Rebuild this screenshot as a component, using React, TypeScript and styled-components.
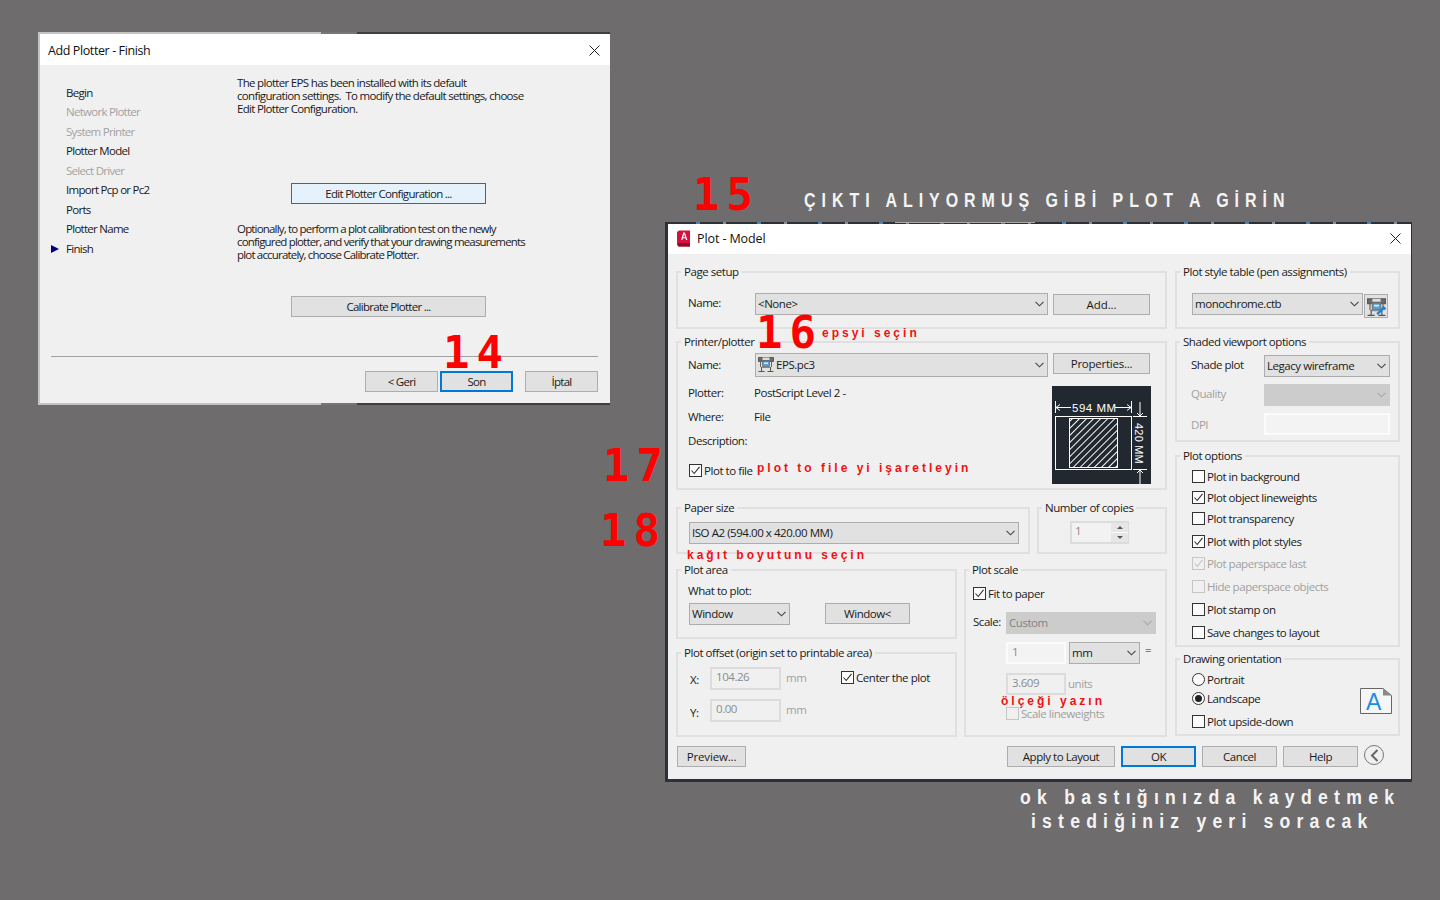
import React from 'react'
import styled, { createGlobalStyle } from 'styled-components'

const Global = createGlobalStyle`
  html, body { margin: 0; padding: 0; background: #6e6c6d; }
  * { box-sizing: border-box; }
`

const Desktop = styled.div`
  position: relative;
  width: 1440px;
  height: 900px;
  overflow: hidden;
  background: #6e6c6d;
  font-family: 'Open Sans', 'Noto Sans', sans-serif;
  font-size: 11.5px;
  color: #1a1a1a;
`

/* ---------- annotations painted over the screenshot ---------- */

const BigNumber = styled.div<{ $x: number; $y: number }>`
  position: absolute;
  left: ${p => p.$x}px;
  top: ${p => p.$y}px;
  font-family: 'DejaVu Sans Mono', monospace;
  font-weight: 700;
  font-size: 44px;
  line-height: 36px;
  letter-spacing: 7px;
  color: #fe0000;
  white-space: nowrap;
  z-index: 5;
`

const RedNote = styled.div<{ $x: number; $y: number }>`
  position: absolute;
  left: ${p => p.$x}px;
  top: ${p => p.$y}px;
  font-family: 'Liberation Sans', sans-serif;
  font-weight: 700;
  font-size: 12px;
  line-height: 14px;
  letter-spacing: 3px;
  color: #f01010;
  white-space: nowrap;
  z-index: 5;
`

const WhiteNote = styled.div<{ $x: number; $y: number; $ls: number; $sx: number }>`
  position: absolute;
  left: ${p => p.$x}px;
  top: ${p => p.$y}px;
  font-family: 'Liberation Sans', sans-serif;
  font-weight: 700;
  font-size: 20px;
  line-height: 24px;
  letter-spacing: ${p => p.$ls}px;
  color: #f4f4f4;
  white-space: nowrap;
  transform: scaleX(${p => p.$sx});
  transform-origin: left center;
  z-index: 5;
`

/* ---------- generic dialog parts ---------- */

const WizardWindow = styled.div`
  position: absolute;
  left: 38px;
  top: 32px;
  width: 572px;
  height: 373px;
  padding: 2px 0 2px 2px;
  letter-spacing: -0.72px;
  background: linear-gradient(90deg, #c4c4c4 0 283px, #77757a 283px 319px, #3f3f42 319px 100%);
`

const PlotWindow = styled.div`
  position: absolute;
  left: 665px;
  top: 222px;
  width: 747px;
  height: 560px;
  padding: 2px 1px 3px 3px;
  letter-spacing: -0.45px;
  background:
    linear-gradient(90deg, transparent 0 230px, #a9a9a9 230px 370px, transparent 370px 100%) top / 100% 1px no-repeat,
    repeating-linear-gradient(90deg, #2c3037 0 31px, #4a86b8 31px 35px, #2c3037 35px 58px, #8b8d90 58px 61px) top / 100% 2px no-repeat,
    #2c3037;
`

const Dialog = styled.div`
  display: flex;
  flex-direction: column;
  width: 100%;
  height: 100%;
  background: #f0f0f0;
`

const TitleBar = styled.div<{ $h: number; $pl: number; $pt: number; $ls: number }>`
  display: flex;
  align-items: center;
  flex: none;
  height: ${p => p.$h}px;
  padding: ${p => p.$pt}px 10px ${p => 2 - p.$pt}px ${p => p.$pl}px;
  background: #fff;
  font-size: 12.5px;
  letter-spacing: ${p => p.$ls}px;
  color: #111;
`

const TitleText = styled.span`
  flex: 1;
`

const Btn = styled.div<{ $w: number; $h?: number; $primary?: boolean; $focus?: boolean; $mt?: number; $ml?: number; $ls?: number }>`
  display: flex;
  align-items: center;
  justify-content: center;
  flex: none;
  width: ${p => p.$w}px;
  height: ${p => p.$h ?? 21}px;
  margin-top: ${p => p.$mt ?? 0}px;
  margin-left: ${p => p.$ml ?? 0}px;
  background: ${p => (p.$primary ? '#e5f1fb' : '#e1e1e1')};
  border: ${p => (p.$focus ? '2px solid #0078d7' : p.$primary ? '1px solid #0078d7' : '1px solid #adadad')};
  white-space: nowrap;
  color: #1a1a1a;
  ${p => (p.$ls !== undefined ? `letter-spacing: ${p.$ls}px;` : '')}
`

const CloseIcon = () => (
  <svg width="11" height="11" viewBox="0 0 11 11" fill="none" stroke="#222" strokeWidth="1">
    <path d="M0.5 0.5 10.5 10.5M10.5 0.5 0.5 10.5" />
  </svg>
)

const Chevron = ({ color = '#444' }: { color?: string }) => (
  <svg width="9" height="6" viewBox="0 0 9 6" fill="none" stroke={color} strokeWidth="1.1">
    <path d="M0.5 0.8 4.5 4.8 8.5 0.8" />
  </svg>
)

/* ---------- add plotter wizard ---------- */

const WizardBody = styled.div`
  display: flex;
  flex-direction: column;
  flex: 1;
  padding: 0 12px 0 11px;
`

const WizardMain = styled.div`
  display: flex;
  flex: none;
  height: 291px;
`

const StepList = styled.div`
  flex: none;
  width: 186px;
  padding-top: 17.5px;
`

const Step = styled.div<{ $muted?: boolean }>`
  position: relative;
  height: 19.5px;
  line-height: 19.5px;
  padding-left: 15px;
  color: ${p => (p.$muted ? '#a2a2a2' : '#1a1a1a')};
`

const StepArrow = styled.span`
  position: absolute;
  left: 0;
  top: 6px;
  width: 0;
  height: 0;
  border-left: 8px solid #00007f;
  border-top: 4px solid transparent;
  border-bottom: 4px solid transparent;
`

const WizardContent = styled.div`
  flex: 1;
  padding-top: 11px;
`

const Para = styled.p<{ $ls: number }>`
  margin: 0;
  line-height: 13px;
  letter-spacing: ${p => p.$ls}px;
  white-space: pre;
`

const WizardBtnSlot = styled.div<{ $mt: number; $mb: number }>`
  margin: ${p => p.$mt}px 0 ${p => p.$mb}px 54px;
`

const WizardRule = styled.div`
  flex: none;
  height: 1px;
  background: #a0a0a0;
`

const WizardFooter = styled.div`
  display: flex;
  justify-content: flex-end;
  padding-top: 14px;
`

const steps = [
  { label: 'Begin' },
  { label: 'Network Plotter', muted: true },
  { label: 'System Printer', muted: true },
  { label: 'Plotter Model' },
  { label: 'Select Driver', muted: true },
  { label: 'Import Pcp or Pc2' },
  { label: 'Ports' },
  { label: 'Plotter Name' },
  { label: 'Finish', active: true },
]

/* ---------- plot dialog layout ---------- */

const PlotBody = styled.div`
  display: grid;
  grid-template-columns: 491px 225px;
  column-gap: 8px;
  padding: 17px 0 0 8px;
`

const Column = styled.div`
  display: flex;
  flex-direction: column;
`

const Group = styled.div<{ $w?: number; $h: number; $mt?: number; $pt?: number; $pl?: number }>`
  position: relative;
  flex: none;
  width: ${p => (p.$w ? `${p.$w}px` : '100%')};
  height: ${p => p.$h}px;
  margin-top: ${p => p.$mt ?? 0}px;
  padding-top: ${p => p.$pt ?? 0}px;
  padding-left: ${p => p.$pl ?? 10}px;
  border: 2px solid #e0e0e0;
`

const Legend = styled.span`
  position: absolute;
  left: 3px;
  top: -9px;
  padding: 0 3px;
  line-height: 16px;
  background: #f0f0f0;
  white-space: nowrap;
`

const Row = styled.div<{ $h?: number; $mt?: number; $gap?: number }>`
  display: flex;
  align-items: center;
  height: ${p => (p.$h ? `${p.$h}px` : 'auto')};
  margin-top: ${p => p.$mt ?? 0}px;
  gap: ${p => p.$gap ?? 0}px;
  white-space: nowrap;
`

const TopRow = styled.div<{ $gap?: number; $mt?: number }>`
  display: flex;
  align-items: flex-start;
  gap: ${p => p.$gap ?? 0}px;
  margin-top: ${p => p.$mt ?? 0}px;
`

const Label = styled.span<{ $w?: number; $muted?: boolean; $ml?: number; $dy?: number }>`
  flex: none;
  width: ${p => (p.$w ? `${p.$w}px` : 'auto')};
  margin-left: ${p => p.$ml ?? 0}px;
  margin-top: ${p => ((p.$dy ?? 0) > 0 ? (p.$dy ?? 0) * 2 : 0)}px;
  margin-bottom: ${p => ((p.$dy ?? 0) < 0 ? -(p.$dy ?? 0) * 2 : 0)}px;
  color: ${p => (p.$muted ? '#a0a0a0' : 'inherit')};
`

const ComboBox = styled.div<{ $w: number; $h?: number; $off?: boolean; $ml?: number }>`
  display: flex;
  align-items: center;
  justify-content: space-between;
  flex: none;
  width: ${p => p.$w}px;
  height: ${p => p.$h ?? 22}px;
  margin-left: ${p => p.$ml ?? 0}px;
  padding: 0 3px 0 2px;
  background: ${p => (p.$off ? '#cccccc' : '#e1e1e1')};
  border: 1px solid ${p => (p.$off ? '#cccccc' : '#adadad')};
  color: ${p => (p.$off ? '#838383' : '#1a1a1a')};
`

const ComboText = styled.span`
  display: flex;
  align-items: center;
  gap: 2px;
  padding-bottom: 2px;
  white-space: nowrap;
`

const TextField = styled.div<{ $w: number; $h?: number; $ml?: number }>`
  display: flex;
  align-items: center;
  flex: none;
  width: ${p => p.$w}px;
  height: ${p => p.$h ?? 23}px;
  margin-left: ${p => p.$ml ?? 0}px;
  padding: 0 0 4px 4px;
  background: #f0f0f0;
  border: 2px solid #dcdcdc;
  color: #8c8c8c;
`

const WhiteField = styled(TextField)`
  background: #f3f3f3;
  border-color: #fbfbfb;
`

const CheckBox = styled.span<{ $off?: boolean }>`
  display: inline-flex;
  align-items: center;
  justify-content: center;
  flex: none;
  width: 13px;
  height: 13px;
  margin-right: 2px;
  background: ${p => (p.$off ? '#f0f0f0' : '#fcfcfc')};
  border: 1px solid ${p => (p.$off ? '#c6c6c6' : '#333333')};
`

const Radio = styled.span<{ $on?: boolean }>`
  display: inline-flex;
  align-items: center;
  justify-content: center;
  flex: none;
  width: 13px;
  height: 13px;
  margin-right: 2px;
  border-radius: 50%;
  background: #fcfcfc;
  border: 1px solid #333333;

  &::after {
    content: '';
    display: ${p => (p.$on ? 'block' : 'none')};
    width: 7px;
    height: 7px;
    border-radius: 50%;
    background: #222;
  }
`

const Check = ({ label, on, off, ml }: { label: string; on?: boolean; off?: boolean; ml?: number }) => (
  <Row>
    <CheckBox $off={off} style={ml ? { marginLeft: ml } : undefined}>
      {on && (
        <svg width="11" height="11" viewBox="0 0 11 11" fill="none" stroke={off ? '#c0c0c0' : '#333'} strokeWidth="1.1">
          <path d="M1.5 5.5 4.2 8.5 9.5 1.8" />
        </svg>
      )}
    </CheckBox>
    <Label $muted={off}>{label}</Label>
  </Row>
)

const InfoColumn = styled.div`
  flex: none;
  width: 364px;
`

const InfoRow = styled.div`
  display: flex;
  height: 14px;
  line-height: 14px;
  margin-bottom: 10px;
`

const PreviewBox = styled.div`
  flex: none;
  width: 99px;
  height: 98px;
  background: #212830;
`

const SpinField = styled.div`
  display: flex;
  width: 59px;
  height: 23px;
  margin-left: 31px;
  background: #f2f2f2;
  border: 2px solid #dcdcdc;
  border-right-width: 1px;
`

const SpinText = styled.span`
  flex: 1;
  padding-left: 3px;
  line-height: 15px;
  color: #8c8c8c;
`

const SpinButtons = styled.div`
  display: flex;
  flex-direction: column;
  width: 17px;
  gap: 1px;
  background: #fbfbfb;
`

const SpinBtn = styled.span<{ $up?: boolean }>`
  display: flex;
  flex: 1;
  align-items: center;
  justify-content: center;
  background: #e6e6e6;

  &::after {
    content: '';
    border-left: 3px solid transparent;
    border-right: 3px solid transparent;
    ${p => (p.$up ? 'border-bottom: 3px solid #555;' : 'border-top: 3px solid #555;')}
  }
`

const CheckList = styled.div`
  display: flex;
  flex-direction: column;
`

const CheckSlot = styled.div<{ $h: number; $mt?: number }>`
  display: flex;
  align-items: center;
  height: ${p => p.$h}px;
  margin-top: ${p => p.$mt ?? 0}px;
`

const OrientIconWrap = styled.div`
  position: absolute;
  right: 6px;
  top: 28px;
`

const PlotFooter = styled.div`
  display: flex;
  align-items: flex-start;
  padding: 9px 0 0 9px;
`

const FooterSpacer = styled.div`
  flex: 1;
`

const CircleBtn = styled.div`
  display: flex;
  align-items: center;
  justify-content: center;
  flex: none;
  width: 20px;
  height: 20px;
  margin: -1px 27px 0 6px;
  border-radius: 50%;
  border: 1.5px solid #777;
  background: #f0f0f0;
`

/* ---------- drawings ---------- */

const AcadIcon = () => (
  <svg width="15" height="17" viewBox="0 0 15 17" style={{ marginRight: 6, flex: 'none' }}>
    <path d="M1 2 3 0.5H14V16.5H2.5L1 15Z" fill="#d5113f" />
    <path d="M2 13h12v3.400H2.600L2 15.500Z" fill="#8e0f2d" />
    <path d="M7.300 2.500h1.600l2.500 7.500H10l-.5-1.700H6.900L6.300 10H5Zm.9 1.600-1 3.100h1.900Z" fill="#fff" />
  </svg>
)

const PrinterIcon = ({ wrench, size = 16 }: { wrench?: boolean; size?: number }) => (
  <svg width={size} height={size} viewBox="0 0 16 16" fill="none" style={{ flex: 'none' }}>
    <path d="M0.500 1.500h15v4h-15z" fill="#6a6a6a" stroke="#5a5a5a" />
    <path d="M4.500 1.500h7v2.500h-7z" fill="#dcdcdc" />
    <path d="M2.500 5.500v5.500M13.500 5.500v5.500" stroke="#666" />
    <path d="M4.500 5.500h7v5h-7z" fill="#4ba3e3" stroke="#7a7a7a" />
    <path d="M6 6.500h4v1.500H6z" fill="#d8ecfa" />
    <path d="M3 11.500h10" stroke="#888" />
    <path d="M3.500 11v4.500M12.500 11v4.500M0.500 15.500h6M9.500 15.500h6" stroke="#555" />
    {wrench && <path d="M8.500 14.500 13 10.500M12.500 10.500l2-2.500M15.500 9l-1.500 1.500" stroke="#1c82d8" strokeWidth="2" />}
  </svg>
)

const SheetPreview = () => (
  <svg width="99" height="98" viewBox="0 0 99 98" fill="none" stroke="#fff" strokeWidth="1">
    <defs>
      <pattern id="hatch" width="5" height="5" patternUnits="userSpaceOnUse" patternTransform="rotate(-45)">
        <path d="M0 2.500H5" stroke="#fff" strokeWidth="1" />
      </pattern>
    </defs>
    <rect x="3.500" y="30.500" width="76" height="53" />
    <rect x="17.500" y="32.500" width="48" height="49" fill="url(#hatch)" />
    <path d="M3.500 15v12M79.500 15v12M4 21.500h15M63 21.500h16M4 21.500l4-3M4 21.500l4 3M79 21.500l-4-3M79 21.500l-4 3" />
    <path d="M88 16v14M88 30l-3-3M88 30l3-3M81 30.500h14M81 83.500h14M88 84v14M88 84l-3 3M88 84l3 3" />
    <text x="20" y="25.500" fill="#fff" stroke="none" fontFamily="'Liberation Sans', sans-serif" fontSize="11.500" letterSpacing="0.500">594  MM</text>
    <text transform="translate(83 37) rotate(90)" fill="#fff" stroke="none" fontFamily="'Liberation Sans', sans-serif" fontSize="11" letterSpacing="0.200">420  MM</text>
  </svg>
)

const OrientIcon = () => (
  <svg width="32" height="26" viewBox="0 0 32 26">
    <path d="M0.500 0.500H23L31.500 7.500V25.500H0.500Z" fill="#f6f6f6" stroke="#666" />
    <path d="M23 0.500V7.500H31.500Z" fill="#8a8a8a" />
    <text x="6" y="22" fill="#1c8de6" fontFamily="'Liberation Sans', sans-serif" fontSize="23">A</text>
  </svg>
)

const BackChevron = () => (
  <svg width="9" height="13" viewBox="0 0 9 13" fill="none" stroke="#666" strokeWidth="2">
    <path d="M7.500 1 2 6.500 7.500 12" />
  </svg>
)

/* ---------- page ---------- */

export default function App() {
  return (
    <Desktop>
      <Global />

      <WizardWindow>
        <Dialog>
          <TitleBar $h={31} $pl={8} $pt={2} $ls={-0.4}>
            <TitleText>Add Plotter - Finish</TitleText>
            <CloseIcon />
          </TitleBar>
          <WizardBody>
            <WizardMain>
              <StepList>
                {steps.map(s => (
                  <Step key={s.label} $muted={s.muted}>
                    {s.active && <StepArrow />}
                    {s.label}
                  </Step>
                ))}
              </StepList>
              <WizardContent>
                <Para $ls={-0.68}>{'The plotter EPS has been installed with its default\nconfiguration settings.  To modify the default settings, choose\nEdit Plotter Configuration.'}</Para>
                <WizardBtnSlot $mt={68} $mb={18}>
                  <Btn $w={195} $primary>Edit Plotter Configuration ...</Btn>
                </WizardBtnSlot>
                <Para $ls={-0.82}>{'Optionally, to perform a plot calibration test on the newly\nconfigured plotter, and verify that your drawing measurements\nplot accurately, choose Calibrate Plotter.'}</Para>
                <WizardBtnSlot $mt={35} $mb={0}>
                  <Btn $w={195}>Calibrate Plotter ...</Btn>
                </WizardBtnSlot>
              </WizardContent>
            </WizardMain>
            <WizardRule />
            <WizardFooter>
              <Btn $w={73}>&lt; Geri</Btn>
              <Btn $w={73} $ml={2} $focus>Son</Btn>
              <Btn $w={73} $ml={12}>İptal</Btn>
            </WizardFooter>
          </WizardBody>
        </Dialog>
      </WizardWindow>

      <PlotWindow>
        <Dialog>
          <TitleBar $h={30} $pl={8} $pt={0} $ls={-0.1}>
            <AcadIcon />
            <TitleText>Plot - Model</TitleText>
            <CloseIcon />
          </TitleBar>
          <PlotBody>
            <Column>
              <Group $h={58} $pt={20}>
                <Legend>Page setup</Legend>
                <Row>
                  <Label $w={67} $dy={-1.5}>Name:</Label>
                  <ComboBox $w={293}>
                    <ComboText>&lt;None&gt;</ComboText>
                    <Chevron />
                  </ComboBox>
                  <Btn $w={97} $ml={5} $mt={1} $ls={-0.1}>Add...</Btn>
                </Row>
              </Group>

              <Group $h={149} $mt={12} $pt={10}>
                <Legend>Printer/plotter</Legend>
                <TopRow>
                  <Label $w={67} style={{ lineHeight: '24px' }}>Name:</Label>
                  <ComboBox $w={293} $h={24}>
                    <ComboText><PrinterIcon />EPS.pc3</ComboText>
                    <Chevron />
                  </ComboBox>
                  <Btn $w={97} $ml={5} $ls={-0.25}>Properties...</Btn>
                </TopRow>
                <TopRow $mt={9}>
                  <InfoColumn>
                    <InfoRow><Label $w={66}>Plotter:</Label><span>PostScript Level 2 -</span></InfoRow>
                    <InfoRow><Label $w={66}>Where:</Label><span>File</span></InfoRow>
                    <InfoRow><Label $w={66}>Description:</Label></InfoRow>
                    <Row $h={14} $mt={15}>
                      <Check label="Plot to file" on ml={1} />
                    </Row>
                  </InfoColumn>
                  <PreviewBox><SheetPreview /></PreviewBox>
                </TopRow>
              </Group>

              <TopRow $gap={7} $mt={17}>
                <Group $w={354} $h={47} $pt={13}>
                  <Legend>Paper size</Legend>
                  <ComboBox $w={330} $ml={1}>
                    <ComboText>ISO A2 (594.00 x 420.00 MM)</ComboText>
                    <Chevron />
                  </ComboBox>
                </Group>
                <Group $w={130} $h={47} $pt={12} $pl={0}>
                  <Legend>Number of copies</Legend>
                  <SpinField>
                    <SpinText>1</SpinText>
                    <SpinButtons>
                      <SpinBtn $up />
                      <SpinBtn />
                    </SpinButtons>
                  </SpinField>
                </Group>
              </TopRow>

              <TopRow $gap={7} $mt={15}>
                <Column>
                  <Group $w={281} $h={70} $pt={12}>
                    <Legend>Plot area</Legend>
                    <Label>What to plot:</Label>
                    <TopRow $mt={5}>
                      <ComboBox $w={101} $ml={1}>
                        <ComboText>Window</ComboText>
                        <Chevron />
                      </ComboBox>
                      <Btn $w={85} $ml={35}>Window&lt;</Btn>
                    </TopRow>
                  </Group>
                  <Group $w={281} $h={85} $mt={13} $pt={13} $pl={12}>
                    <Legend>Plot offset (origin set to printable area)</Legend>
                    <Row $h={23}>
                      <Label $w={20} $dy={1}>X:</Label>
                      <TextField $w={71}>104.26</TextField>
                      <Label $muted $ml={5} $w={55} $dy={-1.5}>mm</Label>
                      <Row style={{ marginBottom: 2 }}>
                        <Check label="Center the plot" on />
                      </Row>
                    </Row>
                    <Row $h={23} $mt={9}>
                      <Label $w={20} $dy={2}>Y:</Label>
                      <TextField $w={71}>0.00</TextField>
                      <Label $muted $ml={5} $dy={-1}>mm</Label>
                    </Row>
                  </Group>
                </Column>

                <Group $w={203} $h={168} $pt={15} $pl={7}>
                  <Legend>Plot scale</Legend>
                  <Row $h={14}>
                    <Check label="Fit to paper" on ml={0} />
                  </Row>
                  <Row $h={22} $mt={12}>
                    <Label $w={33} $dy={-1.5}>Scale:</Label>
                    <ComboBox $w={150} $off>
                      <ComboText>Custom</ComboText>
                      <Chevron color="#a9a9a9" />
                    </ComboBox>
                  </Row>
                  <Row $h={22} $mt={8}>
                    <WhiteField $w={60} $h={22} $ml={33}>1</WhiteField>
                    <ComboBox $w={71} $ml={3}>
                      <ComboText>mm</ComboText>
                      <Chevron />
                    </ComboBox>
                    <Label $ml={5} $dy={-4}>=</Label>
                  </Row>
                  <Row $h={22} $mt={9}>
                    <TextField $w={60} $h={22} $ml={33}>3.609</TextField>
                    <Label $muted $ml={2} $dy={-0.5}>units</Label>
                  </Row>
                  <Row $h={14} $mt={11}>
                    <Check label="Scale lineweights" off ml={33} />
                  </Row>
                </Group>
              </TopRow>
            </Column>

            <Column>
              <Group $h={58} $pt={20} $pl={15}>
                <Legend>Plot style table (pen assignments)</Legend>
                <TopRow>
                  <ComboBox $w={171}>
                    <ComboText>monochrome.ctb</ComboText>
                    <Chevron />
                  </ComboBox>
                  <Btn $w={24} $h={24} $ml={1} $mt={1}><PrinterIcon wrench size={19} /></Btn>
                </TopRow>
              </Group>

              <Group $h={101} $mt={12} $pt={12} $pl={14}>
                <Legend>Shaded viewport options</Legend>
                <Row $h={22}>
                  <Label $w={73} $dy={-1.5}>Shade plot</Label>
                  <ComboBox $w={126}>
                    <ComboText>Legacy wireframe</ComboText>
                    <Chevron />
                  </ComboBox>
                </Row>
                <Row $h={22} $mt={7}>
                  <Label $w={73} $muted $dy={-1.5}>Quality</Label>
                  <ComboBox $w={126} $off>
                    <span />
                    <Chevron color="#a9a9a9" />
                  </ComboBox>
                </Row>
                <Row $h={22} $mt={7}>
                  <Label $w={73} $muted>DPI</Label>
                  <WhiteField $w={126} $h={22} />
                </Row>
              </Group>

              <Group $h={192} $mt={13} $pt={9} $pl={15}>
                <Legend>Plot options</Legend>
                <CheckList>
                  <CheckSlot $h={21}><Check label="Plot in background" /></CheckSlot>
                  <CheckSlot $h={21}><Check label="Plot object lineweights" on /></CheckSlot>
                  <CheckSlot $h={21}><Check label="Plot transparency" /></CheckSlot>
                  <CheckSlot $h={21} $mt={2}><Check label="Plot with plot styles" on /></CheckSlot>
                  <CheckSlot $h={21} $mt={1}><Check label="Plot paperspace last" on off /></CheckSlot>
                  <CheckSlot $h={21} $mt={2}><Check label="Hide paperspace objects" off /></CheckSlot>
                  <CheckSlot $h={21} $mt={2}><Check label="Plot stamp on" /></CheckSlot>
                  <CheckSlot $h={21} $mt={2}><Check label="Save changes to layout" /></CheckSlot>
                </CheckList>
              </Group>

              <Group $h={78} $mt={11} $pt={10} $pl={15}>
                <Legend>Drawing orientation</Legend>
                <CheckSlot $h={19}><Radio /><Label>Portrait</Label></CheckSlot>
                <CheckSlot $h={19}><Radio $on /><Label>Landscape</Label></CheckSlot>
                <CheckSlot $h={26}><Check label="Plot upside-down" /></CheckSlot>
                <OrientIconWrap><OrientIcon /></OrientIconWrap>
              </Group>
            </Column>
          </PlotBody>

          <PlotFooter>
            <Btn $w={69} $ls={-0.15}>Preview...</Btn>
            <FooterSpacer />
            <Btn $w={108}>Apply to Layout</Btn>
            <Btn $w={75} $ml={6} $focus>OK</Btn>
            <Btn $w={75} $ml={6}>Cancel</Btn>
            <Btn $w={75} $ml={6}>Help</Btn>
            <CircleBtn><BackChevron /></CircleBtn>
          </PlotFooter>
        </Dialog>
      </PlotWindow>

      <BigNumber $x={443} $y={335}>14</BigNumber>
      <BigNumber $x={693} $y={177}>15</BigNumber>
      <BigNumber $x={756} $y={315}>16</BigNumber>
      <BigNumber $x={603} $y={448}>17</BigNumber>
      <BigNumber $x={600} $y={513}>18</BigNumber>

      <RedNote $x={822} $y={326}>epsyi seçin</RedNote>
      <RedNote $x={757} $y={461}>plot to file yi işaretleyin</RedNote>
      <RedNote $x={687} $y={548}>kağıt boyutunu seçin</RedNote>
      <RedNote $x={1001} $y={694}>ölçeği yazın</RedNote>

      <WhiteNote $x={804} $y={188} $ls={7.45} $sx={0.8}>ÇIKTI ALIYORMUŞ GİBİ PLOT A GİRİN</WhiteNote>
      <WhiteNote $x={1020} $y={785} $ls={7.15} $sx={0.88}>ok bastığınızda kaydetmek</WhiteNote>
      <WhiteNote $x={1031} $y={809} $ls={7.05} $sx={0.88}>istediğiniz yeri soracak</WhiteNote>
    </Desktop>
  )
}
